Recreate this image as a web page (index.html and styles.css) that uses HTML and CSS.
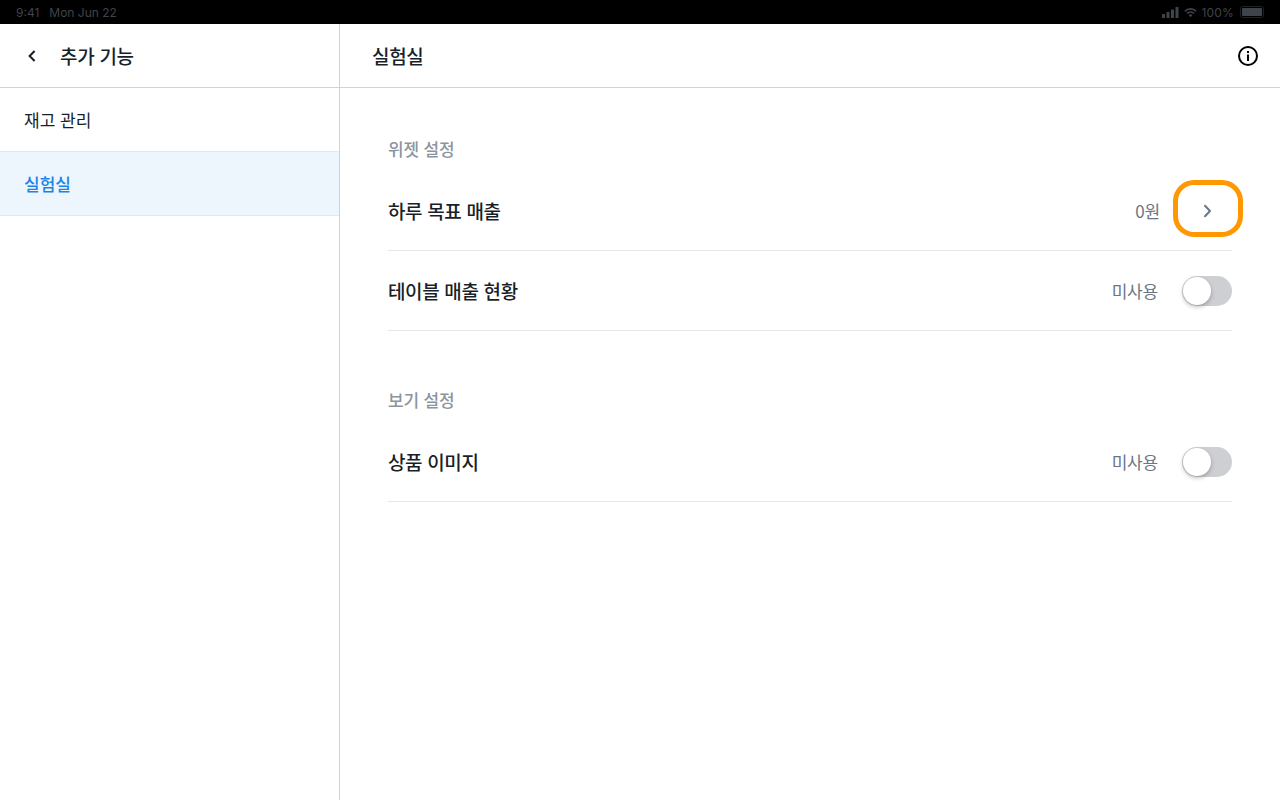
FILE: index.html
```html
<!DOCTYPE html>
<html lang="ko">
<head>
<meta charset="utf-8">
<title>실험실</title>
<link rel="stylesheet" href="styles.css">
</head>
<body>
<div class="status">
  <div class="status-left"><span>9:41</span><span>Mon Jun 22</span></div>
  <div class="status-right">
    <svg class="signal" width="17" height="11" viewBox="0 0 17 11"><rect x="0" y="7" width="3" height="4" rx=".6"/><rect x="4.5" y="5" width="3" height="6" rx=".6"/><rect x="9" y="2.5" width="3" height="8.5" rx=".6"/><rect x="13.5" y="0" width="3" height="11" rx=".6"/></svg>
    <svg class="wifi" width="13" height="11" viewBox="0 0 14 11"><path d="M7 10.6 4.9 8.3a3 3 0 0 1 4.2 0z"/><path d="M3.8 7.2 2.6 5.9a6.3 6.3 0 0 1 8.8 0l-1.2 1.3a4.6 4.6 0 0 0-6.4 0z"/><path d="M1.5 4.8.2 3.5a9.8 9.8 0 0 1 13.6 0l-1.3 1.3a8 8 0 0 0-11 0z"/></svg>
    <span>100%</span>
    <div class="battery"><div class="battery-fill"></div></div>
  </div>
</div>
<div class="app">
  <aside class="side">
    <header class="side-head">
      <svg class="back" width="24" height="24" viewBox="0 0 24 24"><path d="M14.6 7 9.6 12l5 5"/></svg>
      <h1>추가 기능</h1>
    </header>
    <nav>
      <div class="nav-item">재고 관리</div>
      <div class="nav-item active">실험실</div>
    </nav>
  </aside>
  <main class="main">
    <header class="main-head">
      <h2>실험실</h2>
      <svg class="info" width="24" height="24" viewBox="0 0 24 24"><circle cx="12" cy="12" r="9" /><rect class="info-mark" x="11" y="10.5" width="2" height="6.5"/><rect class="info-mark" x="11" y="7" width="2" height="2"/></svg>
    </header>
    <div class="content">
      <section class="group">
        <h3>위젯 설정</h3>
        <div class="row">
          <span class="label">하루 목표 매출</span>
          <div class="control"><span class="value">0원</span>
            <div class="chev-box"><svg width="24" height="24" viewBox="0 0 24 24"><path d="M9 6.8 14 12l-5 5.2"/></svg></div>
          </div>
        </div>
        <div class="row">
          <span class="label">테이블 매출 현황</span>
          <div class="control"><span class="value">미사용</span><div class="toggle"><div class="knob"></div></div></div>
        </div>
      </section>
      <section class="group">
        <h3>보기 설정</h3>
        <div class="row">
          <span class="label">상품 이미지</span>
          <div class="control"><span class="value">미사용</span><div class="toggle"><div class="knob"></div></div></div>
        </div>
      </section>
    </div>
  </main>
</div>
</body>
</html>
```
FILE: styles.css
```css
*, *::after { box-sizing: border-box; }
html, body { margin: 0; height: 100%; }
body {
  width: 1280px; height: 800px; overflow: hidden; background: #fff;
  font-family: "Noto Sans CJK KR", "Noto Sans", sans-serif; color: #191f28;
}
h1, h2, h3 { margin: 0; }
.status {
  height: 24px; background: #000; color: #3f444b; font-family: Inter, "Liberation Sans", sans-serif;
  font-size: 12px; display: flex; justify-content: space-between; align-items: center; padding: 0 16px 0 16px;
}
.status-left { display: flex; gap: 10px; }
.status-right { display: flex; align-items: center; gap: 4px; }
.status-right span { letter-spacing: .2px; margin-right: 2px; }
.signal, .wifi { fill: #3f444b; }
.wifi { margin-left: 1px; }
.battery { width: 24px; height: 12px; border: 1px solid #1e2124; border-radius: 3px; padding: 1px; }
.battery-fill { height: 100%; background: #3f444b; border-radius: 1px; }
.app { display: flex; height: 776px; }
.side { width: 340px; border-right: 1px solid #d1d3d6; }
.side-head { height: 64px; display: flex; align-items: center; gap: 16px; padding-left: 20px; border-bottom: 1px solid #d1d3d6; }
.side-head h1 { font-size: 19px; font-weight: 500; line-height: 28px; letter-spacing: -.3px; }
.back { fill: none; stroke: #191f28; stroke-width: 2; }
.nav-item { height: 64px; display: flex; align-items: center; padding-left: 24px; border-bottom: 1px solid #e5e8eb; font-size: 17px; color: #191f28; }
.nav-item.active { background: #edf6fd; color: #1b84e7; font-weight: 500; }
.main { flex: 1; }
.main-head { height: 64px; display: flex; align-items: center; justify-content: space-between; padding: 0 20px 0 32px; border-bottom: 1px solid #d1d3d6; }
.main-head h2 { font-size: 19px; font-weight: 500; letter-spacing: -.3px; }
.info { fill: none; stroke: #000; stroke-width: 2; }
.info-mark { fill: #000; stroke: none; }
.content { padding: 49px 48px 0; display: flex; flex-direction: column; gap: 57px; }
.group h3 { font-size: 17px; font-weight: 500; line-height: 24px; letter-spacing: -.2px; color: #8b95a1; height: 34px; }
.row { height: 80px; display: flex; align-items: center; justify-content: space-between; border-bottom: 1px solid #e5e8eb; }
.label { font-size: 19px; font-weight: 500; letter-spacing: -.36px; color: #191f28; }
.control { display: flex; align-items: center; }
.value { font-size: 17px; letter-spacing: -.2px; color: #6b7684; }
.toggle { width: 50px; height: 30px; border-radius: 15px; background: #cdcfd2; padding: 1px; margin-left: 24px; }
.knob { width: 28px; height: 28px; border-radius: 50%; background: #fff; box-shadow: 0 2px 4px rgba(0,0,0,.25); }
.chev-box { position: relative; width: 24px; height: 24px; margin: 0 12px 0 36px; }
.chev-box svg { display: block; fill: none; stroke: #6b7684; stroke-width: 2; stroke-linecap: round; stroke-linejoin: round; }
.chev-box::after { content: ""; position: absolute; left: -23px; top: -19px; width: 70px; height: 57px; border: 5px solid #ff9800; border-radius: 21px; filter: blur(.4px); }
```
